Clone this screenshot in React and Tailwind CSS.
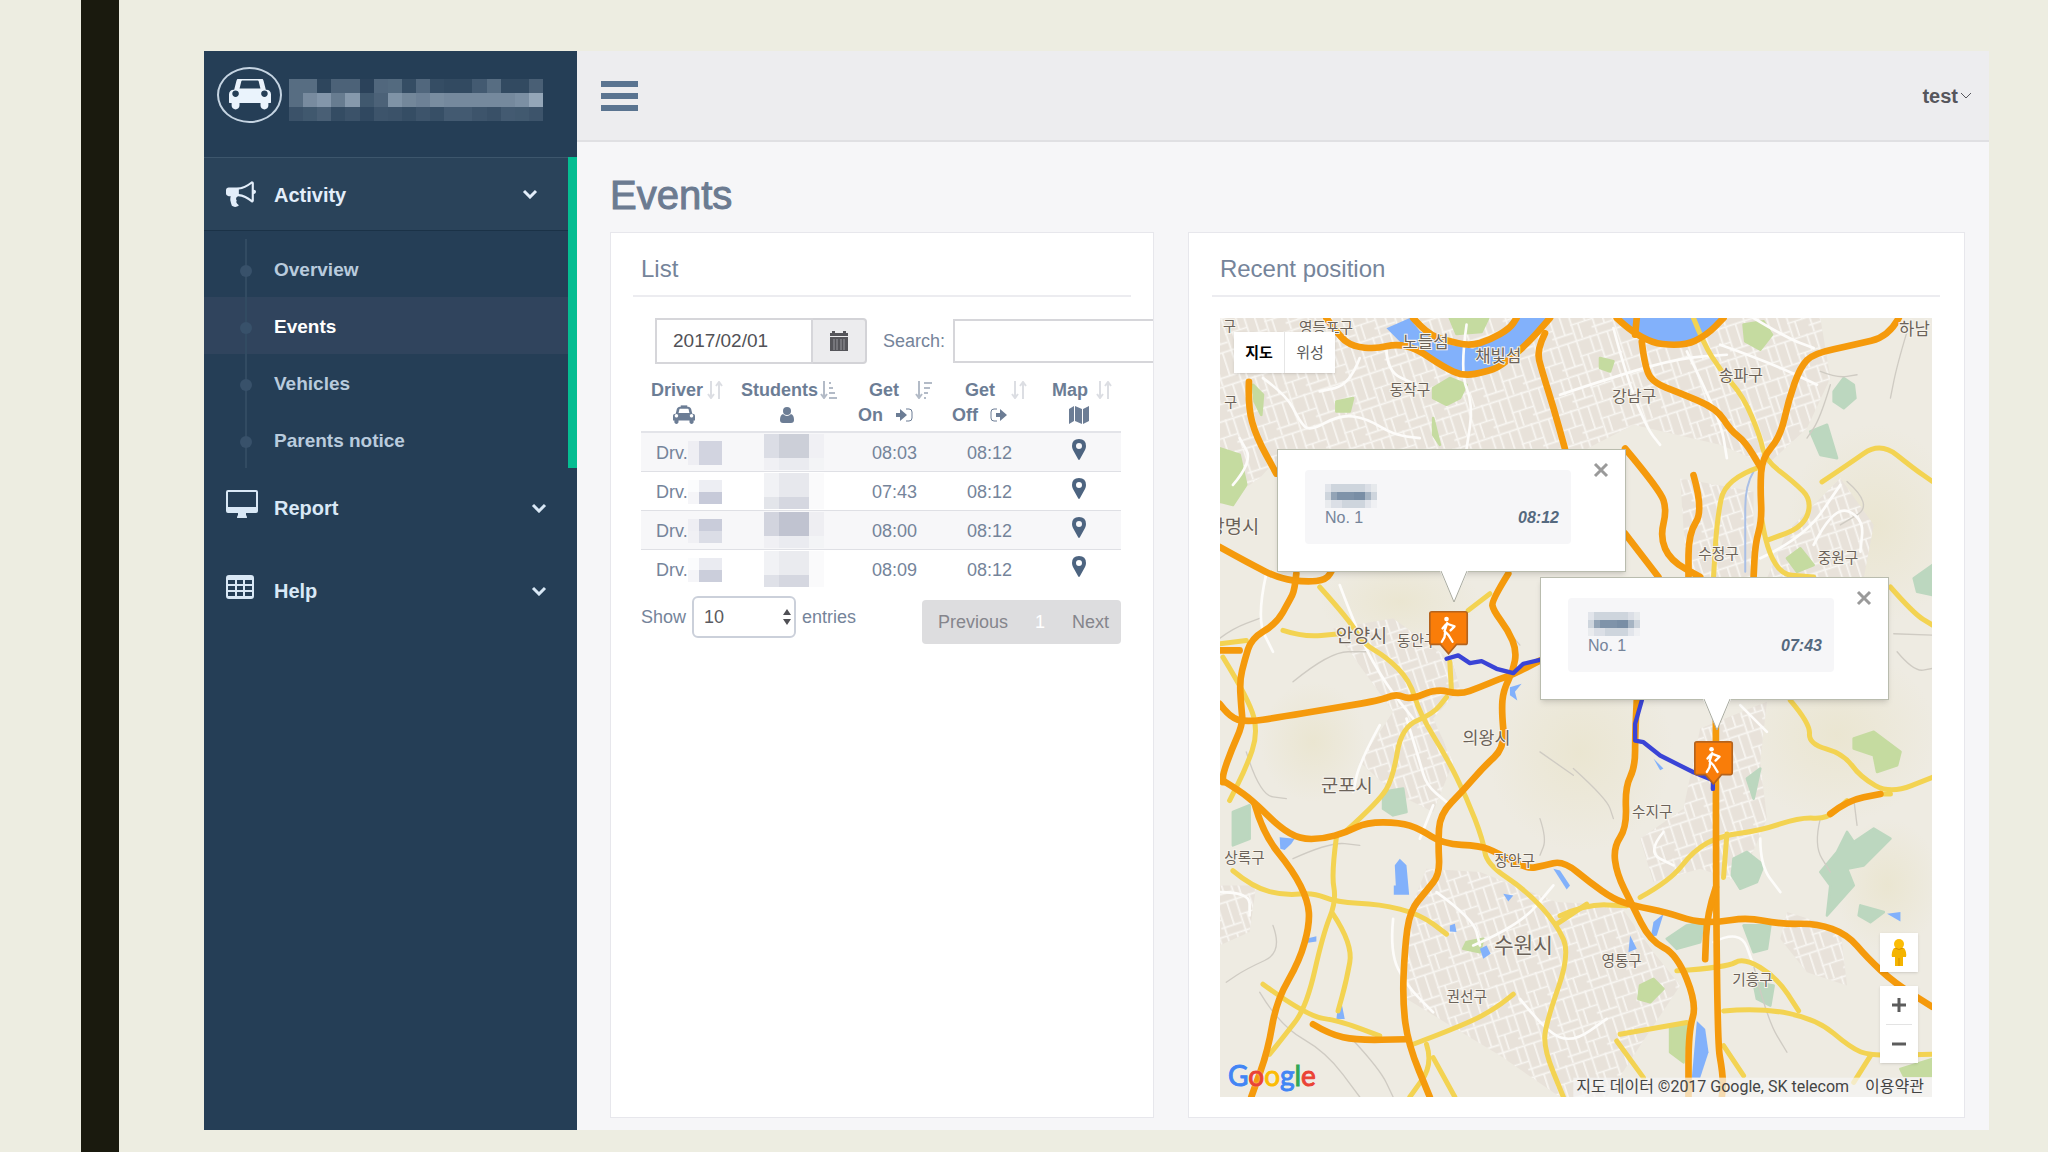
import { useState } from "react";

// Quadratic curve through the midpoints of a list of "x,y" points
function smooth(points) {
  const p = points.split(" ").map((s) => s.split(",").map(Number));
  let d = `M${p[0][0]} ${p[0][1]}`;
  for (let i = 1; i < p.length - 1; i++) {
    const mx = (p[i][0] + p[i + 1][0]) / 2;
    const my = (p[i][1] + p[i + 1][1]) / 2;
    d += ` Q${p[i][0]} ${p[i][1]} ${mx} ${my}`;
  }
  const last = p[p.length - 1];
  return `${d} L${last[0]} ${last[1]}`;
}

const HIGHWAYS = [
  "320,0 360,56 400,86 470,92 530,78 590,92 670,146 730,174 800,161 840,146 920,80 990,0",
  "580,0 620,46 680,68 750,84 810,66 870,31 890,0",
  "975,46 950,96 965,156 1000,266 1035,392",
  "88,191 85,266 110,356 170,466",
  "0,686 90,736 180,781 260,791 320,785 340,750",
  "230,766 225,816 210,846 170,916 95,961 75,1026 60,1086 65,1166 70,1216 35,1296 10,1366 10,1391",
  "0,1380 60,1416 110,1456 180,1526 240,1561 310,1561 380,1541 440,1511 540,1511 600,1531 670,1576 780,1581 830,1601 920,1651 970,1641 1030,1626 1110,1691 1180,1741 1240,1761 1340,1781 1420,1808 1490,1811 1580,1796 1680,1816 1790,1814 1880,1846 1940,1916 2020,1991 2136,2064",
  "0,1156 30,1196 80,1211 180,1196 330,1171 480,1146 530,1126 570,1144 650,1111 720,1128 780,1106 840,1081 880,1068 960,1026",
  "865,766 815,846 820,876 865,936 890,996 880,1056 850,1116 845,1176 855,1286 790,1346 730,1416 660,1486 655,1576 660,1666 620,1716 570,1776 555,1886 548,2046 565,2176 630,2334",
  "105,1456 130,1546 220,1656 265,1746 270,1816 240,1926 170,2046 145,2196 95,2334",
  "280,2116 330,2146 410,2164 560,2161",
  "0,996 60,996",
  "1190,0 1265,71 1390,85 1460,51 1510,0",
  "1250,0 1245,50",
  "1265,71 1275,156 1305,196 1370,221 1490,271 1530,336 1575,371 1620,446",
  "2035,0 2005,56 1900,81 1780,106 1740,146 1705,246 1680,356 1625,421 1620,506 1625,606 1605,676 1600,776",
  "1215,391 1320,516 1340,576 1320,656 1350,726 1440,776",
  "1420,471 1450,576 1405,646 1405,776",
  "1215,646 1315,776",
  "1487,1200 1487,2146 1510,2276 1505,2334",
  "1250,1146 1245,1246 1245,1346 1215,1406 1220,1526 1180,1586 1190,1666 1235,1756 1290,1866 1370,1906 1430,2056 1405,2136 1405,2334",
  "1487,1706 1460,1786 1455,1921",
  "1830,1486 1880,1446 1980,1426",
];

const ROADS = [
  "1420,0 1450,76 1500,156 1570,236 1620,356 1635,426 1720,491 1775,546 1750,626 1640,666",
  "1620,446 1515,481 1490,606 1480,776",
  "1625,606 1650,766 1780,776",
  "1805,491 1880,441 1980,371 2080,451 2136,490",
  "2010,806 2080,886 2136,920",
  "1710,1146 1770,1216 1765,1276 1870,1306 1920,1376 2010,1426 2136,1376",
  "1260,1736 1350,1686 1420,1596 1500,1551 1620,1536 1740,1496 1820,1501 1880,1446",
  "1980,1426 2010,1426",
  "1520,1546 1510,1676",
  "1510,2076 1620,2066 1790,2101 1890,2186 1950,2211 2136,2206",
  "1950,2211 1900,2290",
  "1370,1956 1520,1946 1570,1916 1670,1976 1735,2076",
  "1200,2146 1400,2111",
  "1190,2166 1270,2276",
  "1510,2180 1570,2270",
  "1020,1791 1100,1756 1220,1761",
  "130,1996 260,2091 360,2106 480,2151",
  "350,1556 335,1666 350,1746 310,1846 260,2066 190,2156 150,2206",
  "40,1656 100,1706 200,1731 280,1721 350,1751 480,1756 600,1786 680,1846",
  "340,1786 400,1876 380,1986 355,2076",
  "380,1536 480,1446 520,1376 545,1226 640,1186 680,1136",
  "300,806 390,906 430,976 500,1016 570,1086 600,1186 680,1316 740,1436 790,1566 800,1636 920,1716 1010,1816 1050,1906 980,2106 970,2186 1030,2334",
  "1010,1816 1100,1756",
  "190,936 250,956 360,946",
  "0,976 80,966",
  "10,1016 90,1146 115,1246 80,1346 30,1446",
  "580,2176 740,2116 830,2066 880,2026",
  "620,2176 640,2236 570,2334",
  "640,2216 705,2334",
  "745,876 810,826",
  "690,1030 695,1120",
];

const STREETS = [
  "130,180 200,230 240,310 270,340 360,290 440,300 520,350 600,360",
  "420,120 390,200 300,220",
  "500,90 500,160 590,200",
  "1020,230 1200,170 1380,120 1520,110",
  "1180,30 1220,180 1280,330 1320,380",
  "1500,80 1640,130 1790,200",
  "1600,0 1700,60 1780,90",
  "1400,100 1500,300 1520,420",
  "740,20 720,160 760,260 740,392",
  "40,500 100,430 60,360",
  "140,766 110,900 160,1000",
  "360,800 420,960 500,1100 580,1200",
  "480,1220 420,1330 400,1420",
  "560,1200 600,1330 620,1400 680,1450",
  "640,1460 600,1560",
  "0,1720 90,1720 90,1790",
  "650,1720 760,1800 780,1880",
  "520,1800 510,1900 560,2000 640,2080",
  "900,2040 980,2140 1060,2170 1160,2100",
  "760,1880 900,1820 1000,1700",
  "1330,1540 1280,1600 1360,1640",
  "1620,1560 1620,1640 1680,1720",
  "1560,1160 1640,1240",
  "1780,680 1840,560 1930,600 1920,700",
  "1620,720 1750,660 1860,500",
  "1480,1870 1560,1830 1600,1940",
];

const LANES = [
  "1880,490 1960,560 1860,620",
  "2060,40 2030,140 2010,240",
  "1800,160 1850,180 1910,170",
  "1830,200 1800,300 1760,360",
  "0,960 40,930 120,900",
  "220,1090 330,1000 440,1000",
  "80,1300 120,1430 200,1440",
  "220,1620 330,1570 420,1580",
  "160,1820 190,1900 80,1950 20,1990",
  "120,2020 180,2120 320,2200 420,2334",
  "960,1500 980,1560 960,1610",
  "830,900 900,980",
  "960,1300 1060,1370",
  "400,2164 480,2250 520,2334",
  "1600,1940 1640,2100 1700,2200",
  "2030,1000 2080,1060 2136,1050",
  "2020,946 2136,950",
  "1800,1500 1780,1580 1830,1660",
  "1900,1440 1910,1520",
  "1060,1350 1160,1440 1180,1500",
];

const URBAN = [
  "M0 0H1800L1830 180L1760 330L1640 440L1500 380L1240 320L1100 392H200L120 480L0 560Z",
  "M340 930L520 900L700 1030L720 1110L640 1200L700 1330L640 1480L520 1420L420 1330L520 1180Z",
  "M620 1650L780 1660L1010 1750L1200 1760L1300 1900L1380 2000L1260 2180L1160 2334H1020L840 2210L560 2040L560 1800Z",
  "M1440 1230L1640 1150L1620 1330L1640 1500L1560 1690L1440 1650L1300 1690L1260 1560L1390 1470Z",
  "M1700 640L1860 480L1960 620L1930 780H1640Z",
  "M1700 1780L1860 1830L1880 2000L1760 1960L1680 1860Z",
  "M0 1700H110L90 1840L0 1880Z",
  "M1380 480L1600 520L1600 776H1400Z",
];

const PARKS = [
  "M0 390L60 410L80 500L40 560L0 550Z",
  "M640 210L690 180L740 200L720 240L680 260L640 240Z",
  "M690 0H805L785 42L710 48Z",
  "M350 250L400 240L390 280L350 280Z",
  "M640 300L660 380L640 350Z",
  "M1570 20L1630 10L1655 50L1620 95L1575 70Z",
  "M1140 120L1180 130L1170 160L1140 150Z",
  "M100 200L130 230L125 290L105 250Z",
  "M1900 1260L1960 1240L2040 1300L2030 1340L1970 1360L1960 1310L1900 1290Z",
  "M1260 2000L1300 1980L1330 2010L1290 2050L1255 2040Z",
  "M1350 2120L1400 2110L1390 2230L1350 2200Z",
  "M2040 2250L2136 2220V2270H2050Z",
  "M1700 720L1740 690L1780 740L1730 760Z",
  "M740 1870L790 1860L780 1900L730 1890Z",
];

const FORESTS = [
  "M1840 220L1870 180L1900 200L1905 240L1870 270L1840 250Z",
  "M1770 340L1820 320L1850 420L1800 410Z",
  "M490 1420L550 1410L560 1480L520 1490L490 1470Z",
  "M40 1480L90 1460L90 1560L40 1580Z",
  "M1540 1620L1580 1600L1630 1640L1610 1690L1560 1710L1535 1670Z",
  "M1800 1660L1850 1600L1880 1540L1900 1570L1960 1530L2010 1560L1930 1640L1880 1650L1900 1700L1820 1790L1830 1700Z",
  "M1340 1860L1400 1820L1450 1810L1440 1870L1370 1890Z",
  "M1570 1820L1650 1820L1640 1890L1600 1900Z",
  "M1600 1990L1660 2000L1650 2060L1610 2040Z",
  "M1920 1760L1990 1780L1950 1810L1915 1790Z",
  "M2080 780L2136 740V830L2090 820Z",
  "M1580 1380L1620 1350L1600 1440Z",
];

const WATER = [
  "M500 31L570 0L600 40L690 80L760 92L830 60L880 0H990L930 76L840 146L740 178L670 146L600 96L545 76Z",
  "M1190 0H1515L1460 56L1390 80L1265 68Z",
  "M525 1640L540 1620L560 1640L568 1728H522V1700H528Z",
  "M180 1556L225 1560L215 1575L195 1594L182 1590Z",
  "M1000 1650L1020 1655L1050 1700L1040 1712Z",
  "M870 1106L905 1096L885 1120L892 1146L870 1130Z",
  "M780 1890L800 1880L812 1905L790 1920Z",
  "M265 1858L290 1852V1868L265 1872Z",
  "M355 2060L365 2050L375 2100H350Z",
  "M1430 2106L1455 2130L1465 2200L1440 2276H1415Z",
  "M1330 1786L1310 1850L1292 1855L1300 1810Z",
  "M1230 1850L1250 1890L1225 1900Z",
  "M2000 1785L2040 1780V1808Z",
  "M690 1820L705 1815L710 1840L690 1838Z",
  "M850 1725L880 1730L865 1748Z",
  "M1300 1320L1330 1350L1320 1355Z",
];

const LABELS = [
  { text: "영등포구", x: 238, y: 46, size: 44 },
  { text: "구", x: 10, y: 40, size: 42 },
  { text: "노들섬", x: 548, y: 90, size: 50 },
  { text: "채빛섬", x: 766, y: 132, size: 50 },
  { text: "동작구", x: 510, y: 232, size: 44 },
  { text: "구", x: 14, y: 266, size: 42 },
  { text: "광명시", x: -36, y: 644, size: 56 },
  { text: "강남구", x: 1176, y: 252, size: 48 },
  { text: "송파구", x: 1496, y: 188, size: 48 },
  { text: "하남", x: 2036, y: 50, size: 50 },
  { text: "수정구", x: 1434, y: 722, size: 44 },
  { text: "중원구", x: 1792, y: 734, size: 44 },
  { text: "안양시", x: 348, y: 970, size: 56 },
  { text: "동안구", x: 532, y: 984, size: 44 },
  { text: "의왕시", x: 728, y: 1276, size: 52 },
  { text: "군포시", x: 304, y: 1420, size: 56 },
  { text: "상록구", x: 14, y: 1634, size: 44 },
  { text: "장안구", x: 824, y: 1642, size: 44 },
  { text: "수지구", x: 1236, y: 1496, size: 44 },
  { text: "수원시", x: 822, y: 1904, size: 64 },
  { text: "권선구", x: 680, y: 2048, size: 44 },
  { text: "영통구", x: 1144, y: 1942, size: 44 },
  { text: "기흥구", x: 1536, y: 1998, size: 44 },
];

function MapCanvas() {
  return (
    <svg viewBox="0 0 2136 2334" preserveAspectRatio="xMidYMid slice" className="absolute inset-0 w-full h-full" aria-hidden="true">
      <defs>
        <pattern id="blocks" width="124" height="98" patternUnits="userSpaceOnUse" patternTransform="rotate(-18)">
          <path d="M0 4H124M0 52H70M60 76H124M4 0V98M46 0V52M70 4V98M100 4V76M24 52V98" stroke="#f8f6f2" strokeWidth="5" fill="none" />
        </pattern>
        <radialGradient id="hill">
          <stop offset="0" stopColor="#e8e2c6" stopOpacity="0.6" />
          <stop offset="1" stopColor="#e8e2c6" stopOpacity="0" />
        </radialGradient>
      </defs>
      <rect width="2136" height="2334" fill="#eeebe2" />
      <ellipse cx="1080" cy="1300" rx="280" ry="300" fill="url(#hill)" />
      <ellipse cx="1960" cy="620" rx="260" ry="300" fill="url(#hill)" />
      <ellipse cx="1850" cy="1250" rx="300" ry="260" fill="url(#hill)" />
      <ellipse cx="280" cy="1270" rx="160" ry="180" fill="url(#hill)" />
      <ellipse cx="540" cy="850" rx="240" ry="140" fill="url(#hill)" />
      <ellipse cx="2000" cy="1700" rx="160" ry="200" fill="url(#hill)" />
      {URBAN.map((d) => (
        <g key={d}>
          <path d={d} fill="#e8e2da" />
          <path d={d} fill="url(#blocks)" />
        </g>
      ))}
      {PARKS.map((d) => (
        <path key={d} d={d} fill="#c5dba0" stroke="#c5dba0" strokeWidth="8" strokeLinejoin="round" />
      ))}
      {FORESTS.map((d) => (
        <path key={d} d={d} fill="#bcd7bf" stroke="#bcd7bf" strokeWidth="8" strokeLinejoin="round" />
      ))}
      {WATER.map((d) => (
        <path key={d} d={d} fill="#82b1fb" />
      ))}
      <g fill="none" strokeLinecap="round" strokeLinejoin="round">
        {LANES.map((p) => (
          <path key={p} d={smooth(p)} stroke="#cfcbc3" strokeWidth="4" />
        ))}
        {STREETS.map((p) => (
          <path key={p} d={smooth(p)} stroke="#fdfcfa" strokeWidth="8" />
        ))}
        <path d={smooth("1600,460 1575,500 1575,640 1575,760")} stroke="#a9bfe6" strokeWidth="6" />
        {ROADS.map((p) => (
          <path key={p} d={smooth(p)} stroke="#f3d352" strokeWidth="15" />
        ))}
        {HIGHWAYS.map((p) => (
          <path key={p} d={smooth(p)} stroke="#f59a0c" strokeWidth="20" />
        ))}
        <path d="M680 1021L715 1011L750 1034L785 1028L830 1051L880 1064L910 1036L960 1024" stroke="#3a44d6" strokeWidth="13" />
        <path d="M1265 1146L1245 1216V1266L1270 1271L1320 1311L1420 1361L1478 1385V1411" stroke="#3a44d6" strokeWidth="13" />
      </g>
      <g fill="#6b6259" stroke="#f6f3ec" strokeWidth="6" paintOrder="stroke" fontFamily="'Noto Sans CJK KR', sans-serif">
        {LABELS.map((l, i) => (
          <text key={i} x={l.x} y={l.y} fontSize={l.size}>
            {l.text}
          </text>
        ))}
      </g>
      <rect x="1060" y="2276" width="1076" height="58" fill="#f5f5f5" fillOpacity="0.7" />
      <Marker x={628} y={876} />
      <Marker x={1422} y={1266} />
    </svg>
  );
}

function Marker({ x, y }) {
  return (
    <g transform={`translate(${x} ${y})`}>
      <path d="M8 4H108Q114 4 114 10V96Q114 102 108 102H82L58 130L34 102H8Q2 102 2 96V10Q2 4 8 4Z" fill="#f97d09" stroke="#b4631d" strokeWidth="5" />
      <circle cx="52" cy="26" r="7" fill="#fff" />
      <path d="M54 38L46 62L58 74L70 94M48 64L46 80L38 94M54 40L76 48L64 60M50 42L40 54" fill="none" stroke="#fff" strokeWidth="7" strokeLinecap="round" strokeLinejoin="round" />
    </g>
  );
}

function CarIcon({ className, taxi }) {
  return (
    <svg viewBox={taxi ? "0 -128 2048 1792" : "0 128 2048 1536"} className={className} fill="currentColor" aria-hidden="true">
      <g transform="translate(0 1536) scale(1 -1)">
        <path fillRule="evenodd" d="M480 704q0 -66 -47 -113t-113 -47t-113 47t-47 113t47 113t113 47t113 -47t47 -113zM516 960h1016l-89 357q-2 8 -14 17.5t-21 9.5h-768q-9 0 -21 -9.5t-14 -17.5zM1888 704q0 -66 -47 -113t-113 -47t-113 47t-47 113t47 113t113 47t113 -47t47 -113zM2048 672v-384q0 -14 -9 -23t-23 -9h-96v-128q0 -80 -56 -136t-136 -56t-136 56t-56 136v128h-1024v-128q0 -80 -56 -136t-136 -56t-136 56t-56 136v128h-96q-14 0 -23 9t-9 23v384q0 93 65.5 158.5t158.5 65.5h28l105 419q23 94 104 157.5t179 63.5h768q98 0 179 -63.5t104 -157.5l105 -419h28q93 0 158.5 -65.5t65.5 -158.5z" />
        {taxi && <path d="M720 1500h608v164h-608z" />}
      </g>
    </svg>
  );
}

function BullhornIcon() {
  return (
    <svg viewBox="0 0 1792 1792" className="w-[30px] h-[30px]" fill="currentColor" aria-hidden="true">
      <path
        transform="translate(0 1536) scale(1 -1)"
        d="M1664 896q53 0 90.5 -37.5t37.5 -90.5t-37.5 -90.5t-90.5 -37.5v-384q0 -52 -38 -90t-90 -38q-417 347 -812 380q-58 -19 -91 -66t-31 -100.5t40 -92.5q-20 -33 -23 -65.5t6 -58t33.5 -55t48 -50t61.5 -50.5q-29 -58 -111.5 -83t-168.5 -11.5t-132 55.5q-7 23 -29.5 87.5t-32 94.5t-23 89t-15 101t3.5 98.5t22 110.5h-122q-66 0 -113 47t-47 113v192q0 66 47 113t113 47h480q435 0 896 384q52 0 90 -38t38 -90v-384zM1536 292v954q-394 -302 -768 -343v-270q377 -42 768 -341z"
      />
    </svg>
  );
}

function DesktopIcon() {
  return (
    <svg viewBox="0 0 32 28" className="w-8 h-7" fill="currentColor" aria-hidden="true">
      <path fillRule="evenodd" d="M2 0H30Q32 0 32 2V21Q32 23 30 23H20V25Q21 26 21 28H11Q11 26 12 25V23H2Q0 23 0 21V2Q0 0 2 0ZM2 2V17H30V2Z" />
    </svg>
  );
}

function TableIcon() {
  return (
    <svg viewBox="0 0 28 24" className="w-7 h-6" fill="currentColor" aria-hidden="true">
      <path fillRule="evenodd" d="M3 0H25Q28 0 28 3V21Q28 24 25 24H3Q0 24 0 21V3Q0 0 3 0ZM2 5V9H9V5ZM11 5V9H17V5ZM19 5V9H26V5ZM2 11V15H9V11ZM11 11V15H17V11ZM19 11V15H26V11ZM2 17V21H9V17ZM11 17V21H17V17ZM19 17V21H26V17Z" />
    </svg>
  );
}

function Chevron() {
  return (
    <svg viewBox="0 0 16 10" className="w-4 h-[10px]" fill="none" stroke="currentColor" strokeWidth="3" aria-hidden="true">
      <path d="M2 2L8 8L14 2" />
    </svg>
  );
}

function SortIcon({ kind }) {
  if (kind === "none") {
    return (
      <svg viewBox="0 0 16 18" className="w-4 h-[18px] text-[#dcdee3]" fill="none" stroke="currentColor" strokeWidth="2" aria-hidden="true">
        <path d="M4 0V16M1 13L4 17L7 13M12 18V2M9 5L12 1L15 5" />
      </svg>
    );
  }
  return (
    <svg viewBox="0 0 18 18" className="w-[18px] h-[18px] text-[#b3bbc7]" fill="none" stroke="currentColor" strokeWidth="2" aria-hidden="true">
      <path d="M4 0V16M1 13L4 17L7 13" />
      {kind === "asc" ? <path d="M9 2H11M9 7H13M9 12H15M9 17H17" /> : <path d="M9 2H17M9 7H15M9 12H13M9 17H11" />}
    </svg>
  );
}

function UserIcon() {
  return (
    <svg viewBox="0 0 14 18" className="w-[14px] h-[18px]" fill="currentColor" aria-hidden="true">
      <circle cx="7" cy="5" r="4" />
      <path d="M3 8Q7 12 11 8Q14 9 14 14Q14 17 11 17H3Q0 17 0 14Q0 9 3 8Z" />
    </svg>
  );
}

function SignInIcon() {
  return (
    <svg viewBox="0 0 18 14" className="w-[18px] h-[14px]" fill="currentColor" aria-hidden="true">
      <path d="M1 5H5V1L12 7L5 13V9H1Z" />
      <path d="M11 1H14Q17 1 17 4V10Q17 13 14 13H11" fill="none" stroke="currentColor" />
    </svg>
  );
}

function SignOutIcon() {
  return (
    <svg viewBox="0 0 18 14" className="w-[18px] h-[14px]" fill="currentColor" aria-hidden="true">
      <path d="M6 5H10V1L17 7L10 13V9H6Z" />
      <path d="M7 1H4Q1 1 1 4V10Q1 13 4 13H7" fill="none" stroke="currentColor" />
    </svg>
  );
}

function MapIcon() {
  return (
    <svg viewBox="0 0 20 18" className="w-5 h-[18px]" fill="currentColor" aria-hidden="true">
      <path d="M0 3L5 0V15L0 18ZM6 0L13 3V18L6 15ZM14 3L20 0V15L14 18Z" />
    </svg>
  );
}

function PinIcon() {
  return (
    <svg viewBox="0 0 14 21" className="w-[14px] h-[21px] inline-block" fill="currentColor" aria-hidden="true">
      <path fillRule="evenodd" d="M7 0Q14 0 14 7Q14 9 13 11L8 20Q7 22 6 20L1 11Q0 9 0 7Q0 0 7 0ZM7 4A3 3 0 1 0 7 10A3 3 0 1 0 7 4Z" />
    </svg>
  );
}

function CalendarIcon() {
  return (
    <svg viewBox="0 0 18 20" className="w-[18px] h-5" aria-hidden="true">
      <path d="M0 2H2V0H5V2H13V0H16V2H18V5H0ZM0 6H18V20H0Z" fill="#55555a" />
      <path d="M4 8V19M7 8V19M11 8V19M14 8V19" stroke="#97979c" />
    </svg>
  );
}

function PegmanIcon() {
  return (
    <svg viewBox="0 0 16 28" className="w-4 h-7" aria-hidden="true">
      <path d="M3 9H13Q16 13 15 18L12 18V27H4V18L1 18Q0 13 3 9Z" fill="#f4b400" />
      <circle cx="8" cy="5" r="5" fill="#fbbc05" />
      <path d="M4 9Q8 12 12 9M8 19V27" stroke="#d88f00" fill="none" />
    </svg>
  );
}

// Pixelated block that hides a name
function Mosaic({ rows, cell, color, className }) {
  const cols = rows[0].length;
  return (
    <svg viewBox={`0 0 ${cols * cell} ${rows.length * cell}`} className={className} preserveAspectRatio="none" shapeRendering="crispEdges" aria-hidden="true">
      {rows.map((row, r) =>
        row.map((o, c) => (
          <rect key={`${r}-${c}`} x={c * cell} y={r * cell} width={cell} height={cell} fill={color} fillOpacity={o / 100} />
        ))
      )}
    </svg>
  );
}

const BRAND = [
  [45, 45, 8, 35, 35, 5, 40, 42, 15, 40, 15, 12, 12, 28, 45, 12, 12, 32],
  [45, 75, 85, 60, 88, 25, 35, 82, 70, 65, 76, 72, 72, 72, 72, 72, 78, 100],
  [20, 25, 32, 14, 20, 10, 22, 20, 15, 22, 16, 28, 28, 22, 18, 28, 26, 22],
];

const SUBMENU = ["Overview", "Events", "Vehicles", "Parents notice"];

function Sidebar() {
  const [active, setActive] = useState("Events");
  return (
    <aside className="w-[373px] shrink-0 bg-[#253e56]">
      <div className="h-[106px] pt-4 pl-[13px] flex items-start gap-[7px]">
        <span className="w-[65px] h-[56px] rounded-[50%] border-2 border-[#c5d4e2] flex items-center justify-center text-[#eaf3fc]">
          <CarIcon className="w-[42px] h-8" />
        </span>
        <Mosaic rows={BRAND} cell={14} color="#94a6b8" className="w-[254px] h-[42px] mt-3" />
      </div>

      <nav>
        <ul>
          <li className="border-r-[9px] border-[#05bd92]">
            <button type="button" className="w-full h-[74px] pl-[22px] pr-[30px] flex items-center bg-[#2a435a] border-t border-t-[#3d566c] border-b border-b-[#1b3247] text-[#e3eefa]">
              <span className="w-12 flex"><BullhornIcon /></span>
              <span className="text-[20px] font-bold flex-1 text-left pt-[2px]">Activity</span>
              <Chevron />
            </button>
            <ul className="relative pt-[9px]">
              <li className="absolute left-[41px] top-2 bottom-0 w-[2px] bg-[#324b62]" aria-hidden="true"></li>
              {SUBMENU.map((item) => (
                <li key={item} className={item === active ? "bg-[#30445d]" : ""}>
                  <a
                    href="#"
                    onClick={() => setActive(item)}
                    className={`relative flex items-center h-[57px] pt-1 pl-9 text-[19px] font-bold ${item === active ? "text-white" : "text-[#b9cbdd]"}`}
                  >
                    <span className="w-3 h-3 rounded-full bg-[#38516a] mr-[22px]"></span>
                    {item}
                  </a>
                </li>
              ))}
            </ul>
          </li>
          <li>
            <button type="button" className="w-full h-20 pl-[22px] pr-[30px] flex items-center text-[#d9e8f6]">
              <span className="w-12 flex pb-2"><DesktopIcon /></span>
              <span className="text-[20px] font-bold flex-1 text-left">Report</span>
              <Chevron />
            </button>
          </li>
          <li className="mt-[3px]">
            <button type="button" className="w-full h-20 pl-[22px] pr-[30px] flex items-center text-[#d9e8f6]">
              <span className="w-12 flex pb-2"><TableIcon /></span>
              <span className="text-[20px] font-bold flex-1 text-left">Help</span>
              <Chevron />
            </button>
          </li>
        </ul>
      </nav>
    </aside>
  );
}

const EVENTS = [
  { on: "08:03", off: "08:12", driver: [[15, 60, 60], [15, 60, 60]], student: [[45, 70, 70, 10], [45, 70, 70, 10], [10, 20, 20, 5]] },
  { on: "07:43", off: "08:12", driver: [[5, 25, 25], [15, 80, 80]], student: [[20, 35, 35, 8], [20, 35, 35, 8], [40, 60, 60, 8]] },
  { on: "08:00", off: "08:12", driver: [[15, 75, 75], [10, 45, 45]], student: [[60, 90, 90, 15], [60, 90, 90, 15], [10, 20, 20, 5]] },
  { on: "08:09", off: "08:12", driver: [[5, 30, 30], [15, 75, 75]], student: [[20, 30, 30, 8], [20, 30, 30, 8], [45, 60, 60, 8]] },
];

function ListPanel() {
  const [date, setDate] = useState("2017/02/01");
  const [search, setSearch] = useState("");
  return (
    <section className="min-w-0 overflow-hidden bg-white border border-[#e7e7ec] pt-4 px-[22px]">
      <h2 className="h-12 pt-1 pl-2 text-[24px] leading-8 text-[#75849a] border-b-2 border-[#ececf0]">List</h2>

      <div className="mt-[21px] ml-[22px] flex items-center text-[18px]">
        <div className="flex shrink-0">
          <input
            type="text"
            aria-label="Date"
            value={date}
            onChange={(e) => setDate(e.target.value)}
            className="w-[158px] h-[46px] pl-4 border-2 border-[#d6d6da] text-[19px] text-[#515156] bg-white"
          />
          <button type="button" aria-label="Pick a date" className="w-[54px] h-[46px] border-2 border-l-0 border-[#d3d3d7] rounded-r bg-[#ececee] flex items-center justify-center">
            <CalendarIcon />
          </button>
        </div>
        <label htmlFor="search" className="ml-4 text-[#75849a]">Search:</label>
        <input
          id="search"
          type="text"
          value={search}
          onChange={(e) => setSearch(e.target.value)}
          className="ml-2 w-[240px] h-11 shrink-0 border-2 border-[#d6d6da] bg-white"
        />
      </div>

      <div className="ml-2">
        <table className="mt-2 w-[480px] table-fixed text-[18px] text-center text-[#75849a]">
          <colgroup>
            <col className="w-[85px]" />
            <col className="w-[121px]" />
            <col className="w-[95px]" />
            <col className="w-[95px]" />
            <col className="w-[84px]" />
          </colgroup>
          <thead>
            <tr className="h-[60px] leading-[26px] text-[#6c7d95] border-b-2 border-[#e3e4e9]">
              <th className="p-0 font-bold">
                <span className="flex items-center pl-[10px] gap-1">Driver <SortIcon kind="none" /></span>
                <span className="flex h-6 items-center justify-center"><CarIcon taxi className="w-[22px] h-5" /></span>
              </th>
              <th className="p-0 font-bold">
                <span className="flex items-center pl-[15px] gap-[2px]">Students <SortIcon kind="asc" /></span>
                <span className="flex h-6 items-center justify-center"><UserIcon /></span>
              </th>
              <th className="p-0 font-bold">
                <span className="flex items-center pl-[22px] gap-4">Get <SortIcon kind="desc" /></span>
                <span className="flex h-6 items-center pl-[11px] gap-3">On <SignInIcon /></span>
              </th>
              <th className="p-0 font-bold">
                <span className="flex items-center pl-[23px] gap-4">Get <SortIcon kind="none" /></span>
                <span className="flex h-6 items-center pl-[10px] gap-3">Off <SignOutIcon /></span>
              </th>
              <th className="p-0 font-bold">
                <span className="flex items-center pl-[15px] gap-2">Map <SortIcon kind="none" /></span>
                <span className="flex h-6 items-center justify-center"><MapIcon /></span>
              </th>
            </tr>
          </thead>
          <tbody>
            {EVENTS.map((event, i) => (
              <tr key={i} className="h-[39px] border-b border-[#dfe0e5] odd:bg-[#f7f7f9] last:border-b-0">
                <td className="p-0 pt-[3px]">
                  <span className="flex items-center pl-[15px]">
                    Drv.
                    <Mosaic rows={event.driver} cell={12} color="#b9bdcf" className="w-[34px] h-6" />
                  </span>
                </td>
                <td className="p-0">
                  <Mosaic rows={event.student} cell={12} color="#b9bdcb" className="w-[60px] h-9 ml-[38px]" />
                </td>
                <td className="p-0 pt-[3px]">{event.on}</td>
                <td className="p-0 pt-[3px]">{event.off}</td>
                <td className="p-0 text-[#4d6480]">
                  <button type="button" aria-label="Show on map" className="align-middle flex w-full justify-center pb-1"><PinIcon /></button>
                </td>
              </tr>
            ))}
          </tbody>
        </table>

        <div className="mt-2 w-[480px] flex items-start justify-between text-[18px] text-[#75849a]">
          <label className="flex items-center gap-[6px]">
            Show
            <span className="relative">
              <select defaultValue="10" className="appearance-none w-[104px] h-[42px] pl-[10px] border-2 border-[#cbd0da] rounded-md bg-white text-[#5a5a60]">
                <option>10</option>
                <option>25</option>
                <option>50</option>
              </select>
              <svg viewBox="0 0 8 16" className="absolute right-[5px] top-[13px] w-2 h-4 pointer-events-none" fill="#505055" aria-hidden="true">
                <path d="M4 0L8 6H0ZM4 16L0 10H8Z" />
              </svg>
            </span>
            entries
          </label>
          <div className="mt-1 h-11 w-[199px] pl-4 pr-3 flex items-center justify-between rounded bg-[#dddddf] text-[#85858c]">
            <button type="button">Previous</button>
            <button type="button" className="text-white">1</button>
            <button type="button">Next</button>
          </div>
        </div>
      </div>
    </section>
  );
}

const NAME = [
  [15, 30, 30, 30, 30, 30, 30, 20, 12],
  [30, 75, 90, 90, 90, 95, 95, 60, 30],
  [10, 20, 20, 30, 30, 30, 30, 15, 5],
];

function InfoWindow({ time, className }) {
  return (
    <div className={`absolute w-[349px] h-[123px] bg-white border border-[#b9bcae] shadow-md pt-5 pl-[27px] ${className}`}>
      <div className="w-[266px] h-[74px] rounded bg-[#f6f6f8] pl-5 pr-3 pt-[14px] text-[16px] leading-5">
        <Mosaic rows={NAME} cell={6} color="#7288a0" className="w-[52px] h-6" />
        <div className="flex justify-between text-[#75849a]">
          <span>No. 1</span>
          <time className="font-bold italic text-[#55697f]">{time}</time>
        </div>
      </div>
      <button type="button" aria-label="Close" className="absolute right-4 top-3 w-4 h-4 text-[#9a9a9a]">
        <svg viewBox="0 0 16 16" className="w-4 h-4" stroke="currentColor" strokeWidth="3" aria-hidden="true">
          <path d="M2 2L14 14M14 2L2 14" />
        </svg>
      </button>
      <svg viewBox="0 0 28 32" className="absolute left-[162px] top-full w-7 h-8" aria-hidden="true">
        <path d="M0 0H28L14 31Z" fill="#fff" />
        <path d="M1 0L14 31L27 0" fill="none" stroke="#a9ab9f" />
      </svg>
    </div>
  );
}

function MapPanel() {
  return (
    <section className="min-w-0 flex flex-col bg-white border border-[#e7e7ec] pt-4 pl-[23px] pr-6 pb-5">
      <h2 className="h-12 pt-1 pl-2 text-[24px] leading-8 text-[#75849a] border-b-2 border-[#ececf0]">Recent position</h2>

      <div className="relative flex-1 min-h-[600px] mt-[21px] mx-2 overflow-hidden">
        <MapCanvas />
        <InfoWindow time="08:12" className="left-[57px] top-[131px]" />
        <InfoWindow time="07:43" className="left-[320px] top-[259px]" />

        {/* Map type */}
        <div className="absolute left-[14px] top-[14px] flex h-[41px] bg-white shadow text-[15px] text-[#5a5a5a] font-['Noto_Sans_CJK_KR',sans-serif]">
          <button type="button" className="w-[51px] border-r border-[#e6e6e6] font-bold text-black">지도</button>
          <button type="button" className="w-[50px]">위성</button>
        </div>

        {/* Street view and zoom */}
        <div className="absolute right-[14px] bottom-[34px] w-[38px]">
          <button type="button" aria-label="Street View" className="w-full h-[39px] mb-[14px] bg-white shadow flex items-center justify-center">
            <PegmanIcon />
          </button>
          <div className="bg-white shadow">
            <button type="button" aria-label="Zoom in" className="w-full h-[38px] flex items-center justify-center">
              <svg viewBox="0 0 14 14" className="w-[14px] h-[14px]" stroke="#5c5c5c" strokeWidth="3" aria-hidden="true"><path d="M0 7H14M7 0V14" /></svg>
            </button>
            <div className="mx-[6px] h-px bg-[#e3e3e3]"></div>
            <button type="button" aria-label="Zoom out" className="w-full h-[38px] flex items-center justify-center">
              <svg viewBox="0 0 14 14" className="w-[14px] h-[14px]" stroke="#5c5c5c" strokeWidth="3" aria-hidden="true"><path d="M0 7H14" /></svg>
            </button>
          </div>
        </div>

        {/* Logo */}
        <a href="#" className="absolute left-2 bottom-1 text-[28px] leading-9 font-['Lato',sans-serif] [-webkit-text-stroke:1px] [text-shadow:0_0_2px_white]">
          <span className="text-[#4285f4]">G</span>
          <span className="text-[#ea4335]">o</span>
          <span className="text-[#fbbc05]">o</span>
          <span className="text-[#4285f4]">g</span>
          <span className="text-[#34a853]">l</span>
          <span className="text-[#ea4335]">e</span>
        </a>
        <div className="absolute right-2 bottom-0 flex gap-4 text-[16px] leading-5 text-[#444] font-['Roboto','Noto_Sans_CJK_KR',sans-serif]">
          <span>지도 데이터 ©2017 Google, SK telecom</span>
          <a href="#">이용약관</a>
        </div>
      </div>
    </section>
  );
}

export default function App() {
  return (
    <div className="min-h-screen flex bg-[#edede1] pl-[81px] pr-[59px] font-['Liberation_Sans',Arial,sans-serif]">
      <div className="w-[38px] shrink-0 bg-[#1a1a0e]"></div>

      <div className="ml-[85px] mt-[51px] mb-[22px] flex-1 min-w-0 flex">
        <Sidebar />

        <div className="flex-1 min-w-0 flex flex-col bg-[#f6f6f8]">
          <header className="h-[91px] shrink-0 pl-6 pr-[17px] flex items-center justify-between bg-[#ededef] border-b-2 border-[#e0e0e3]">
            <button type="button" aria-label="Toggle menu" className="flex flex-col gap-[6px]">
              <span className="w-[37px] h-[6px] bg-[#5a7490]"></span>
              <span className="w-[37px] h-[6px] bg-[#5a7490]"></span>
              <span className="w-[37px] h-[6px] bg-[#5a7490]"></span>
            </button>
            <button type="button" className="flex items-center gap-[2px] text-[20px] font-bold text-[#56565c]">
              test
              <svg viewBox="0 0 12 8" className="w-3 h-2" fill="none" stroke="currentColor" aria-hidden="true"><path d="M1 1L6 6L11 1" /></svg>
            </button>
          </header>

          <main className="flex-1 flex flex-col pl-[33px] pr-6 pb-3">
            <h1 className="h-[90px] pt-[30px] text-[40px] leading-[46px] text-[#6c7b91] [-webkit-text-stroke:1px]">Events</h1>
            <div className="flex-1 grid grid-cols-[7fr_10fr] gap-[34px]">
              <ListPanel />
              <MapPanel />
            </div>
          </main>
        </div>
      </div>
    </div>
  );
}
